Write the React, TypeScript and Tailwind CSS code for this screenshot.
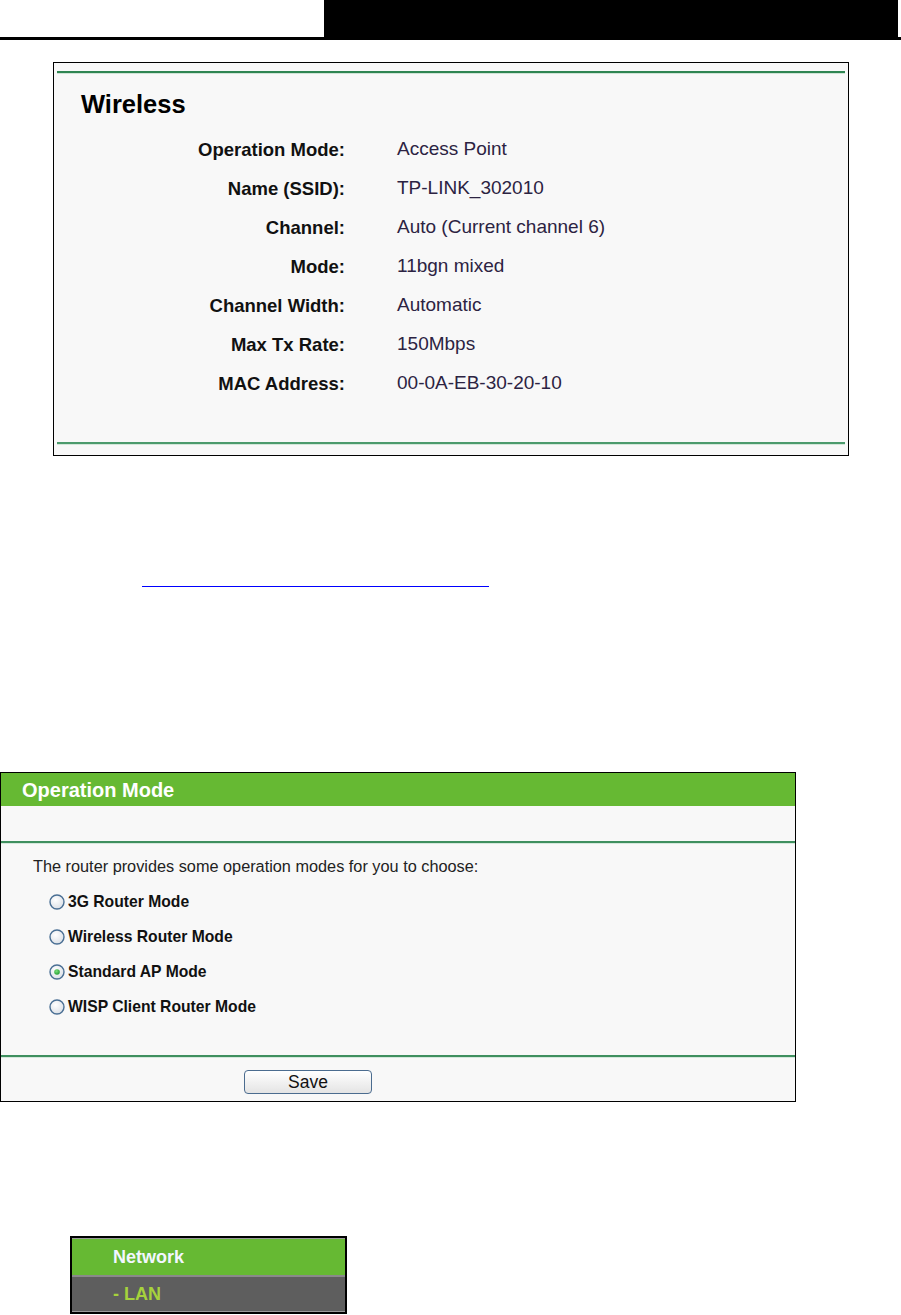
import React from "react";

function Radio({ checked }: { checked?: boolean }) {
  return (
    <svg width="16" height="16" viewBox="0 0 16 16" className="shrink-0">
      <defs>
        <radialGradient id={checked ? "rgc" : "rgu"} cx="40%" cy="35%" r="70%">
          <stop offset="0%" stopColor="#ffffff" />
          <stop offset="100%" stopColor="#d9dee5" />
        </radialGradient>
        <radialGradient id="dot" cx="40%" cy="35%" r="70%">
          <stop offset="0%" stopColor="#7be07b" />
          <stop offset="100%" stopColor="#1f9a2f" />
        </radialGradient>
      </defs>
      <circle cx="8" cy="8" r="7" fill={`url(#${checked ? "rgc" : "rgu"})`} stroke="#4a6f94" strokeWidth="1.4" />
      {checked && <circle cx="8" cy="8" r="2.8" fill="url(#dot)" />}
    </svg>
  );
}

const rows: [string, string][] = [
  ["Operation Mode:", "Access Point"],
  ["Name (SSID):", "TP-LINK_302010"],
  ["Channel:", "Auto (Current channel 6)"],
  ["Mode:", "11bgn mixed"],
  ["Channel Width:", "Automatic"],
  ["Max Tx Rate:", "150Mbps"],
  ["MAC Address:", "00-0A-EB-30-20-10"],
];

const modes: [string, boolean][] = [
  ["3G Router Mode", false],
  ["Wireless Router Mode", false],
  ["Standard AP Mode", true],
  ["WISP Client Router Mode", false],
];

export default function App() {
  return (
    <div className="w-[901px] h-[1315px] bg-white overflow-hidden font-['Liberation_Sans',Arial,sans-serif] text-black">
      {/* Top header */}
      <div className="flex h-[40px] border-b-[3px] border-black">
        <div className="w-[324px]" />
        <div className="w-[574px] bg-black" />
      </div>

      {/* Wireless status box */}
      <div className="ml-[53px] mt-[22px] w-[796px] h-[394px] border border-black bg-[#f8f8f8] flex flex-col px-[3px] pt-[8px] pb-[10px]">
        <div className="h-[2px] bg-[#2f8552]" />
        <div className="h-px bg-[#cfe4d6]" />
        <div className="mt-[15px] pl-[24px] h-[30px] leading-[30px] text-[25.5px] font-bold">Wireless</div>
        <div className="mt-[11px] flex flex-col">
          {rows.map(([l, v]) => (
            <div key={l} className="h-[39px] flex items-center">
              <div className="w-[288px] text-right text-[18.5px] font-bold text-[#111]">{l}</div>
              <div className="pl-[52px] text-[19px] text-[#2c2342]">{v}</div>
            </div>
          ))}
        </div>
        <div className="mt-auto h-[2px] bg-[#4b9a6c]" />
        <div className="h-px bg-[#d3e7da]" />
      </div>

      {/* link underline */}
      <div className="mt-[130px] ml-[142px] w-[347px] h-px bg-[#0000ff]" />

      {/* Operation Mode panel */}
      <div className="mt-[185px] w-[796px] h-[330px] border border-black bg-[#f8f8f8] flex flex-col">
        <div className="h-[33px] bg-[#66b933] flex items-center pl-[21px] text-[20px] font-bold text-white">
          Operation Mode
        </div>
        <div className="h-[35px]" />
        <div className="h-[2px] bg-[#3f8f5f]" />
        <div className="h-px bg-[#d5e8dc]" />
        <div className="h-[211px] flex flex-col">
          <div className="mt-[12px] pl-[32px] h-[20px] leading-[20px] text-[16.3px] text-[#222]">
            The router provides some operation modes for you to choose:
          </div>
          <div className="mt-[8px] flex flex-col">
            {modes.map(([m, c]) => (
              <div key={m} className="h-[35px] flex items-center pl-[48px] gap-[3px]">
                <Radio checked={c} />
                <span className="text-[15.7px] font-bold text-[#111]">{m}</span>
              </div>
            ))}
          </div>
        </div>
        <div className="h-[2px] bg-[#3f8f5f]" />
        <div className="h-px bg-[#d5e8dc]" />
        <div className="flex-1 pt-[12px] pl-[243px]">
          <button className="w-[128px] h-[24px] rounded-[4px] border border-[#4b6c8f] bg-linear-to-b from-white to-[#e4e4e4] text-[17.5px] leading-[20px] text-[#111] flex items-center justify-center">
            Save
          </button>
        </div>
      </div>

      {/* Network menu */}
      <div className="mt-[134px] ml-[70px] w-[277px] border-2 border-black flex flex-col">
        <div className="h-px bg-[#9a9a9a]" />
        <div className="h-[36px] bg-[#66b933] flex items-center pl-[41px] text-[18px] font-bold text-[#f2f6ff]">
          Network
        </div>
        <div className="h-[2px] bg-[#8a8a8a]" />
        <div className="h-[34px] bg-[#5e5e5e] flex items-center pl-[41px] text-[18px] font-bold text-[#a6d23c]">
          - LAN
        </div>
        <div className="h-px bg-[#9a9a9a]" />
      </div>
    </div>
  );
}
